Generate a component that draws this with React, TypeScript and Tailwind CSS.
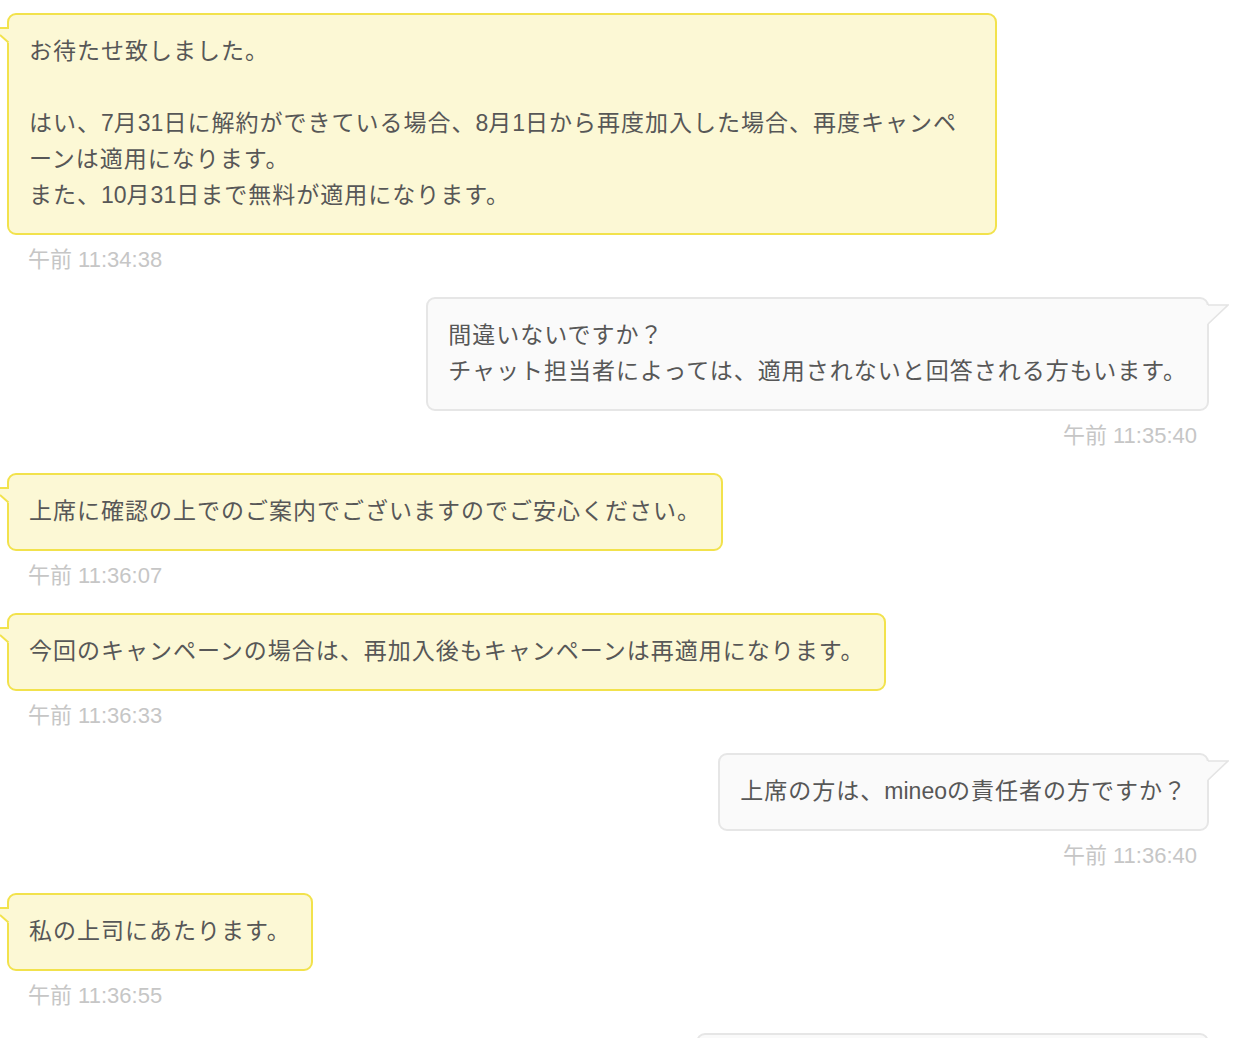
import React from "react";

const FONT = { fontFamily: '"Liberation Sans", "Noto Sans CJK JP", sans-serif' };

function LeftTail() {
  return (
    <svg
      className="absolute left-[-9px] top-[12px]"
      width="12"
      height="18"
      viewBox="0 0 12 18"
    >
      <polygon points="0,1 11,1 11,16 8,16 0,8" fill="#fcf8d5" />
      <path d="M0,1 H9" stroke="#f2e24c" strokeWidth="2" fill="none" />
      <path d="M0,8 L8.5,15.5" stroke="#f2e24c" strokeWidth="2" fill="none" />
    </svg>
  );
}

function RightTail() {
  return (
    <svg
      className="absolute right-[-22px] top-[5px]"
      width="24"
      height="22"
      viewBox="0 0 24 22"
    >
      <polygon points="0,1 23,1 4,20 0,20" fill="#fafafa" />
      <path d="M3,1 H23 L3,20" stroke="#e4e4e4" strokeWidth="1.6" fill="none" strokeLinejoin="miter" />
    </svg>
  );
}

function L({ children }: { children: React.ReactNode }) {
  return <span className="tracking-[0px]">{children}</span>;
}

function Left({ children, time, className = "" }: { children: React.ReactNode; time: string; className?: string }) {
  return (
    <div className="flex flex-col items-start mb-[22px]">
      <div
        className={`relative ml-[7px] rounded-[9px] border-2 border-[#f2e24c] bg-[#fcf8d5] pt-[18px] pb-[20px] px-[20px] text-[23px] leading-[36px] tracking-[1px] text-[#575757] whitespace-nowrap ${className}`}
      >
        <LeftTail />
        {children}
      </div>
      <div className="mt-[10px] pl-[28px] text-[22px] leading-[30px] text-[#c6c6c6]">{time}</div>
    </div>
  );
}

function Right({ children, time, className = "" }: { children: React.ReactNode; time?: string; className?: string }) {
  return (
    <div className="flex flex-col items-end mb-[22px]">
      <div
        className={`relative mr-[27px] rounded-[9px] border-2 border-[#e6e6e6] bg-[#fafafa] pt-[18px] pb-[20px] px-[20px] text-[23px] leading-[36px] tracking-[1px] text-[#575757] whitespace-nowrap ${className}`}
      >
        <RightTail />
        {children}
      </div>
      {time && (
        <div className="mt-[10px] pr-[39px] text-[22px] leading-[30px] text-[#c6c6c6]">{time}</div>
      )}
    </div>
  );
}

export default function App() {
  return (
    <div className="min-h-screen bg-white pt-[13px] overflow-hidden" style={FONT}>
      <Left time="午前 11:34:38" className="w-[990px]">
        お待たせ致しました。
        <br />
        <br />
        はい、<L>7</L>月<L>31</L>日に解約ができている場合、<L>8</L>月<L>1</L>日から再度加入した場合、再度キャンペ
        <br />
        ーンは適用になります。
        <br />
        また、<L>10</L>月<L>31</L>日まで無料が適用になります。
      </Left>
      <Right time="午前 11:35:40">
        間違いないですか？
        <br />
        チャット担当者によっては、適用されないと回答される方もいます。
      </Right>
      <Left time="午前 11:36:07">上席に確認の上でのご案内でございますのでご安心ください。</Left>
      <Left time="午前 11:36:33">今回のキャンペーンの場合は、再加入後もキャンペーンは再適用になります。</Left>
      <Right time="午前 11:36:40">
        上席の方は、<L>mineo</L>の責任者の方ですか？
      </Right>
      <Left time="午前 11:36:55">私の上司にあたります。</Left>
      <Right className="w-[513px]">&nbsp;</Right>
    </div>
  );
}
